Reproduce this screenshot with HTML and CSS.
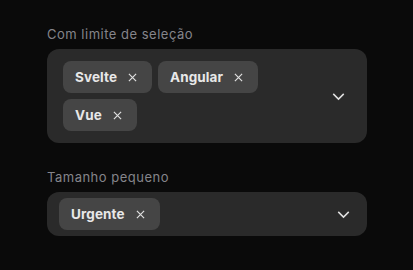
FILE: index.html
```html
<!DOCTYPE html>
<html lang="pt">
<head>
<meta charset="utf-8">
<link rel="stylesheet" href="styles.css">
</head>
<body>
<div class="page">
  <div class="field">
    <div class="label">Com limite de seleção</div>
    <div class="select">
      <div class="chips">
        <span class="chip">Svelte<svg class="x" viewBox="0 0 10 10"><path d="M1 1L9 9M9 1L1 9"/></svg></span>
        <span class="chip">Angular<svg class="x" viewBox="0 0 10 10"><path d="M1 1L9 9M9 1L1 9"/></svg></span>
        <span class="chip">Vue<svg class="x" viewBox="0 0 10 10"><path d="M1 1L9 9M9 1L1 9"/></svg></span>
      </div>
      <svg class="chev" viewBox="0 0 14 8"><path d="M1 1L7 7L13 1"/></svg>
    </div>
  </div>
  <div class="field small">
    <div class="label">Tamanho pequeno</div>
    <div class="select">
      <div class="chips">
        <span class="chip">Urgente<svg class="x" viewBox="0 0 10 10"><path d="M1 1L9 9M9 1L1 9"/></svg></span>
      </div>
      <svg class="chev" viewBox="0 0 14 8"><path d="M1 1L7 7L13 1"/></svg>
    </div>
  </div>
</div>
</body>
</html>
```
FILE: styles.css
```css
html, body {
  margin: 0;
  padding: 0;
  background: #0a0a0a;
  font-family: "Inter", "Lato", sans-serif;
}
.page {
  padding: 24px 0 0 47px;
  width: 320px;
  display: flex;
  flex-direction: column;
  gap: 24px;
}
.field {
  display: flex;
  flex-direction: column;
  gap: 4px;
}
.label {
  color: #85858a;
  font-size: 13px;
  line-height: 21px;
  letter-spacing: 0.5px;
}
.select {
  background: #2a2a2a;
  border-radius: 12px;
  padding: 12px 22px 12px 16px;
  display: flex;
  align-items: center;
  justify-content: space-between;
}
.chips {
  display: flex;
  flex-wrap: wrap;
  gap: 6px;
  width: 210px;
}
.chip {
  background: #454545;
  color: #e8e8e8;
  border-radius: 8px;
  height: 32px;
  padding: 0 15px 0 12px;
  display: inline-flex;
  align-items: center;
  gap: 11px;
  font-weight: 700;
  font-size: 13.5px;
  letter-spacing: 0.1px;
}
.x {
  width: 9px;
  height: 9px;
  fill: none;
  stroke: #e0e0e0;
  stroke-width: 1.3;
}
.chev {
  width: 13px;
  height: 7px;
  fill: none;
  stroke: #e0e0e0;
  stroke-width: 1.7;
  overflow: visible;
}
.small .select {
  padding: 6px 17px 6px 12px;
}
```
